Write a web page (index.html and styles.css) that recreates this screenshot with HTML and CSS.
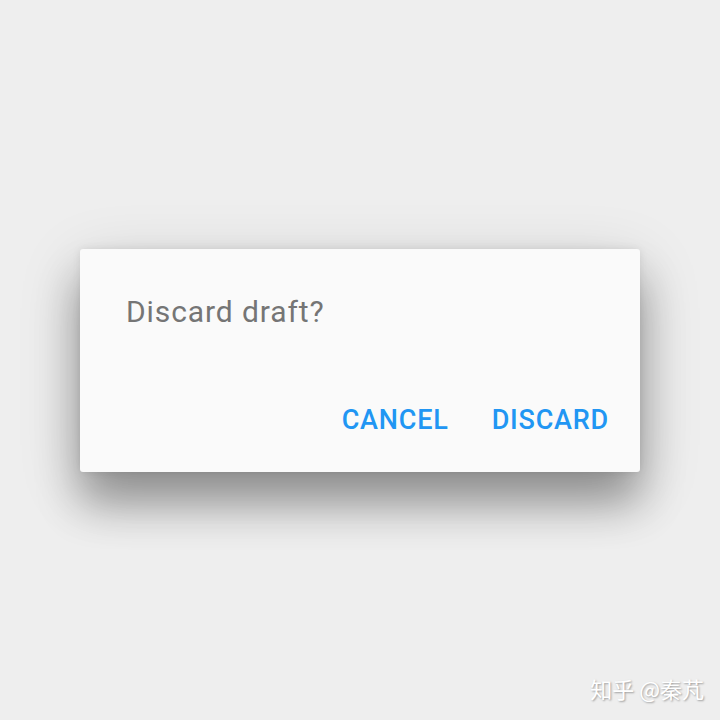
FILE: index.html
```html
<!DOCTYPE html>
<html>
<head>
<meta charset="utf-8">
<link rel="stylesheet" href="styles.css">
</head>
<body>
<div class="stage">
  <div class="dialog">
    <div class="title">Discard draft?</div>
    <div class="actions">
      <span class="btn">CANCEL</span>
      <span class="btn">DISCARD</span>
    </div>
  </div>
  <div class="watermark">知乎 @秦芃</div>
</div>
</body>
</html>
```
FILE: styles.css
```css
html, body {
  margin: 0;
  padding: 0;
  background: #eeeeee;
}
.stage {
  position: relative;
  width: 720px;
  height: 720px;
  display: flex;
  align-items: center;
  justify-content: center;
  font-family: Roboto, "Noto Sans", sans-serif;
}
.dialog {
  width: 560px;
  height: 223px;
  box-sizing: border-box;
  background: #fafafa;
  border-radius: 3px;
  padding: 43px 31px 0 46px;
  display: flex;
  flex-direction: column;
  box-shadow: 0 32px 44px rgba(0, 0, 0, 0.32), 0 16px 64px rgba(0, 0, 0, 0.16), 0 0 8px rgba(0, 0, 0, 0.08);
}
.title {
  font-size: 30px;
  line-height: 40px;
  letter-spacing: 0.9px;
  color: #757575;
}
.actions {
  margin-top: 70px;
  display: flex;
  justify-content: flex-end;
  gap: 43px;
}
.btn {
  font-size: 27px;
  line-height: 36px;
  font-weight: 500;
  letter-spacing: 0.8px;
  color: #2196f3;
}
.watermark {
  position: absolute;
  right: 16px;
  bottom: 19px;
  font-family: "Noto Sans CJK SC", sans-serif;
  font-size: 22px;
  line-height: 26px;
  color: #ffffff;
  text-shadow: 1px 1px 2px rgba(0, 0, 0, 0.35);
}
```
